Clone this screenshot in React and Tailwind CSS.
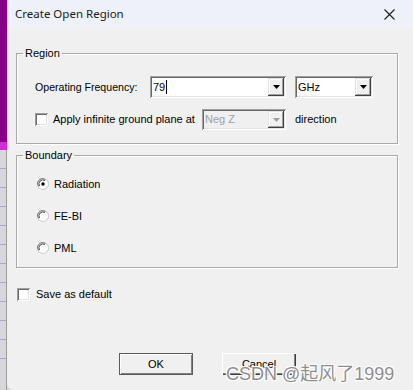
import React from "react";

const FONT = { fontFamily: '"Liberation Sans", Arial, sans-serif' };

function DropBtn({ disabled }) {
  return (
    <div className="absolute right-[2px] top-[2px] bottom-[2px] w-[16px] bg-[#f0f0f0] shadow-[inset_-1px_-1px_0_#404040,inset_1px_1px_0_#e3e3e3,inset_-2px_-2px_0_#a0a0a0,inset_2px_2px_0_#ffffff] flex items-center justify-center">
      <svg width="7" height="4" viewBox="0 0 7 4">
        <path d="M0 0H7L3.5 4Z" fill={disabled ? "#a0a0a0" : "#000"} />
      </svg>
    </div>
  );
}

function Combo({ w, h, children, disabled }) {
  return (
    <div
      className={`relative ${w} ${h} ${disabled ? "bg-[#f0f0f0] text-[#a0a0a0]" : "bg-white text-black"} shadow-[inset_1px_1px_0_#a0a0a0,inset_-1px_-1px_0_#ffffff,inset_2px_2px_0_#696969,inset_-2px_-2px_0_#e3e3e3] flex items-center pl-[3px]`}
    >
      {children}
      <DropBtn disabled={disabled} />
    </div>
  );
}

function Check() {
  return (
    <div className="w-[13px] h-[13px] bg-white shadow-[inset_1px_1px_0_#a0a0a0,inset_-1px_-1px_0_#ffffff,inset_2px_2px_0_#696969,inset_-2px_-2px_0_#e3e3e3] shrink-0" />
  );
}

function Radio({ on }) {
  return (
    <svg width="12" height="12" viewBox="0 0 12 12" className="shrink-0">
      <circle cx="6" cy="6" r="5.5" fill="#ffffff" stroke="#c8c8c8" />
      <path d="M1.5 8.5A5 5 0 0 1 8.5 1.5" stroke="#808080" fill="none" />
      <path d="M2.5 8A4 4 0 0 1 8 2.5" stroke="#404040" fill="none" />
      {on && <circle cx="6" cy="6" r="1.7" fill="#000" />}
    </svg>
  );
}

export default function App() {
  return (
    <div className="relative w-[413px] h-[390px] flex overflow-hidden bg-[#d8d8d8]" style={FONT}>
      <div className="w-[7px] flex flex-col shrink-0">
        <div className="h-[142px] bg-[#870087]" />
        <div className="h-[8px] bg-[#d12bd1]" />
        <div className="flex-1 bg-[#d6d6dc] border-r border-[#9c9c9c] flex flex-col gap-[18px] pt-[18px]">
          <div className="h-px bg-[#a8a8c8]" />
          <div className="h-px bg-[#a8a8c8]" />
          <div className="h-px bg-[#a8a8c8]" />
          <div className="h-px bg-[#a8a8c8]" />
          <div className="h-px bg-[#a8a8c8]" />
          <div className="h-px bg-[#a8a8c8]" />
          <div className="h-px bg-[#a8a8c8]" />
          <div className="h-px bg-[#a8a8c8]" />
          <div className="h-px bg-[#a8a8c8]" />
          <div className="h-px bg-[#a8a8c8]" />
          <div className="h-px bg-[#a8a8c8]" />
        </div>
      </div>

      <div className="flex-1 flex flex-col bg-[#f0f0f0] rounded-bl-[7px] rounded-tl-[3px]">
        <div className="h-[28px] bg-[#eef2f8] flex items-center justify-between pl-[8px] pr-[18px] shrink-0">
          <span className="text-[11.5px] text-[#1b1b1b]" style={{ fontFamily: '"Noto Sans", "Liberation Sans", sans-serif' }}>
            Create Open Region
          </span>
          <svg width="11" height="11" viewBox="0 0 11 11">
            <path d="M0.5 0.5L10.5 10.5M10.5 0.5L0.5 10.5" stroke="#1b1b1b" strokeWidth="1.1" />
          </svg>
        </div>

        <div className="flex flex-col pl-[9px] pr-[15px] pt-[19px] text-[11px] leading-[13px] text-black">
          <fieldset className="border border-[#a9a9a9] shadow-[1px_1px_0_#ffffff,inset_1px_1px_0_#ffffff] m-0 p-0">
            <legend className="ml-[6px] px-[2px] text-[11px] leading-[13px]">Region</legend>
            <div className="flex flex-col pl-[18px] pt-[16px] pb-[13px] gap-[11px]">
              <div className="flex items-center">
                <span className="w-[115px] text-[10.6px]">Operating Frequency:</span>
                <Combo w="w-[136px]" h="h-[22px]">
                  <span>79</span>
                  <span className="w-px h-[14px] bg-black ml-[1px]" />
                </Combo>
                <div className="ml-[9px]">
                  <Combo w="w-[78px]" h="h-[22px]">
                    <span>GHz</span>
                  </Combo>
                </div>
              </div>
              <div className="flex items-center">
                <Check />
                <span className="ml-[5px] w-[149px]">Apply infinite ground plane at</span>
                <Combo w="w-[84px]" h="h-[21px]" disabled>
                  <span>Neg Z</span>
                </Combo>
                <span className="ml-[9px]">direction</span>
              </div>
            </div>
          </fieldset>

          <fieldset className="mt-[5px] border border-[#a9a9a9] shadow-[1px_1px_0_#ffffff,inset_1px_1px_0_#ffffff] m-0 p-0">
            <legend className="ml-[6px] px-[2px] text-[11px] leading-[13px]">Boundary</legend>
            <div className="flex flex-col pl-[20px] pt-[14px] pb-[11px] gap-[16px]">
              <div className="h-[16px] flex items-center gap-[5px]">
                <Radio on />
                <span>Radiation</span>
              </div>
              <div className="h-[16px] flex items-center gap-[5px]">
                <Radio />
                <span>FE-BI</span>
              </div>
              <div className="h-[16px] flex items-center gap-[5px]">
                <Radio />
                <span>PML</span>
              </div>
            </div>
          </fieldset>

          <div className="mt-[18px] ml-[1px] h-[16px] flex items-center gap-[6px]">
            <Check />
            <span>Save as default</span>
          </div>

          <div className="mt-[51px] pl-[103px] flex gap-[29px]">
            <div className="w-[74px] h-[22px] border border-[#5a5a5a] bg-[#f0f0f0] shadow-[inset_1px_1px_0_#ffffff,inset_-1px_-1px_0_#808080] flex items-center justify-center">
              OK
            </div>
            <div className="w-[74px] h-[22px] bg-[#f0f0f0] shadow-[inset_1px_1px_0_#ffffff,inset_-1px_-1px_0_#404040,inset_-2px_-2px_0_#808080] flex items-center justify-center">
              Cancel
            </div>
          </div>
        </div>
      </div>

      <div
        className="absolute left-[226px] top-[363px] text-[18px] leading-[22px] text-[#8e8e8e] whitespace-nowrap"
        style={{
          fontFamily: '"Liberation Sans", "Noto Sans CJK SC", sans-serif',
          textShadow: "1px 1px 0 #ffffff, -1px -1px 0 #ffffff, 1px -1px 0 #ffffff, -1px 1px 0 #ffffff",
        }}
      >
        CSDN @起风了1999
      </div>
    </div>
  );
}
